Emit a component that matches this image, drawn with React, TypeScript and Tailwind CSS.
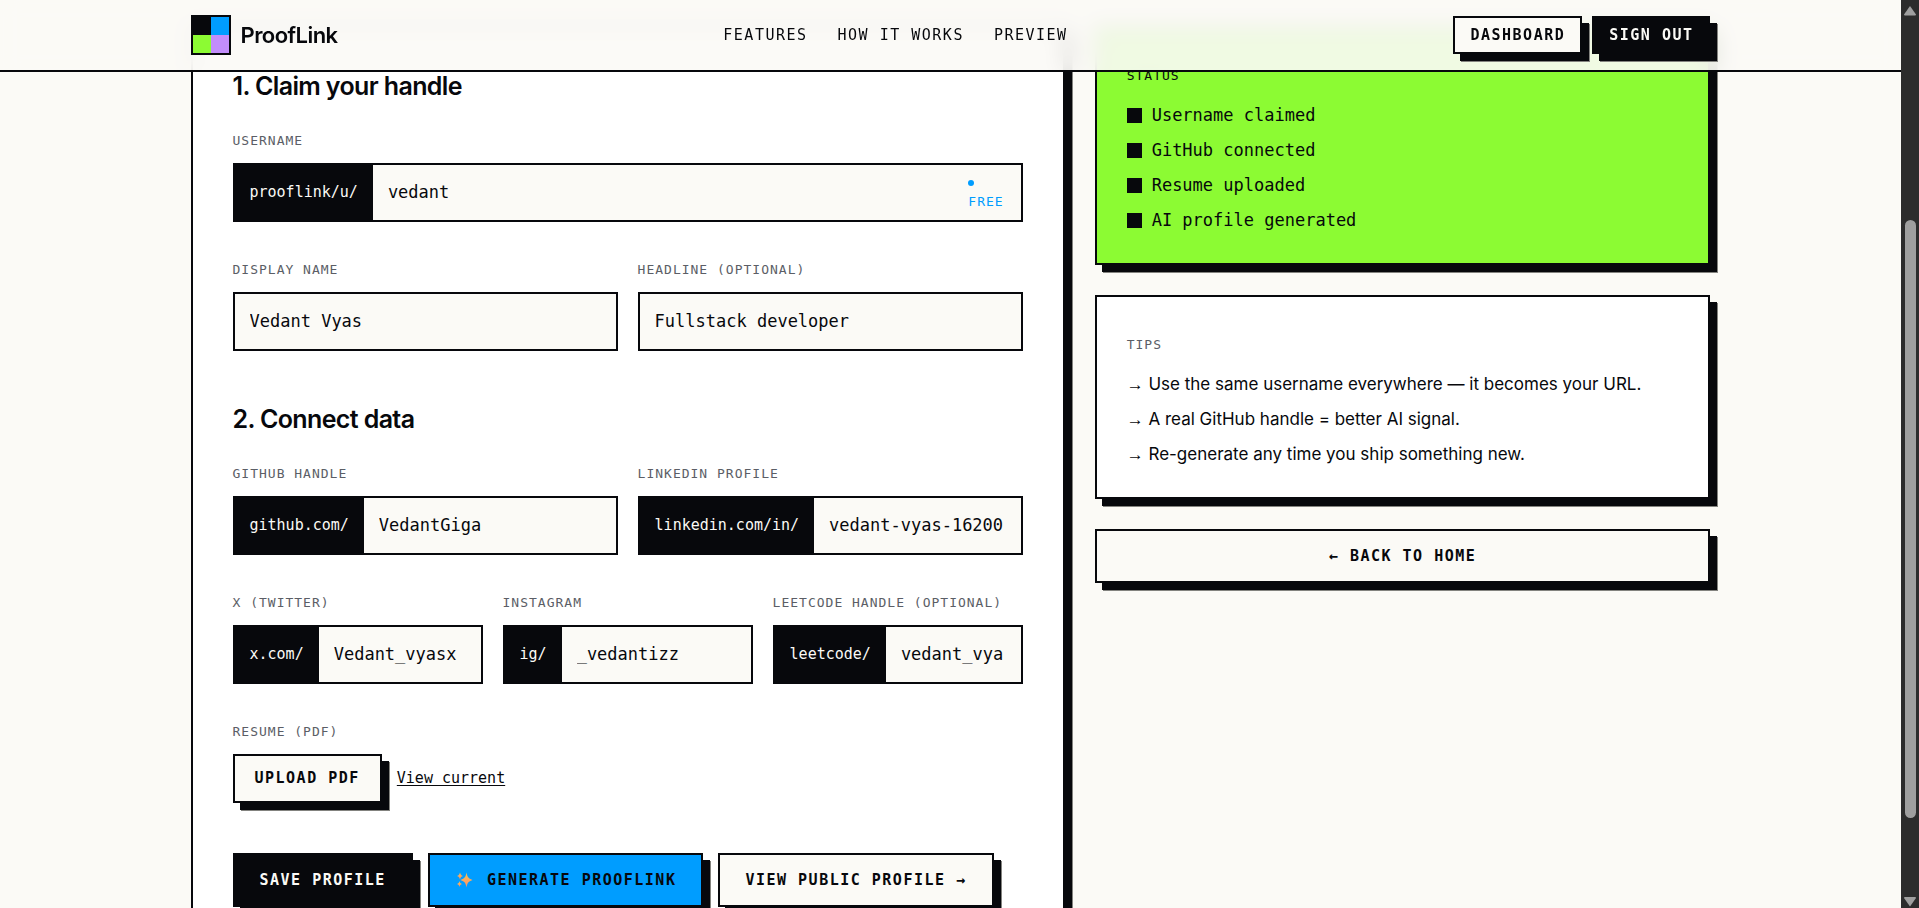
import { useId, useState, ReactNode } from 'react';
import clsx from 'clsx';

const MONO = "font-['DejaVu_Sans_Mono','Liberation_Mono',monospace]";
const SHADOW = 'shadow-[7px_7px_0_#07080c,8px_8px_0_#83837f]';
const LABEL = `${MONO} text-[13px] leading-5 tracking-[1px] uppercase`;
const HEADING = 'mb-[27px] text-[25px] leading-9 font-semibold tracking-tight';

const NAV_LINKS = [
  { label: 'Features', href: '#features' },
  { label: 'How it works', href: '#how' },
  { label: 'Preview', href: '#preview' },
];

const STATUS = ['Username claimed', 'GitHub connected', 'Resume uploaded', 'AI profile generated'];

const TIPS = [
  'Use the same username everywhere — it becomes your URL.',
  'A real GitHub handle = better AI signal.',
  'Re-generate any time you ship something new.',
];

function Logo() {
  return (
    <a href="#top" className="flex items-center gap-[10px]">
      <span className="grid size-10 grid-cols-2 grid-rows-2 border-2 border-[#07080c]">
        <span className="bg-[#07080c]" />
        <span className="bg-[#009dff]" />
        <span className="bg-[#8cfb33]" />
        <span className="bg-[#c28dfb]" />
      </span>
      <span className="text-[22px] font-semibold tracking-tight">ProofLink</span>
    </a>
  );
}

function Sparkles() {
  return (
    <svg width="22" height="18" viewBox="0 0 22 18" aria-hidden="true">
      <defs>
        <linearGradient id="spark" x1="0" y1="0" x2="0" y2="1">
          <stop offset="0" stopColor="#fdc44f" />
          <stop offset="1" stopColor="#fb8d6c" />
        </linearGradient>
      </defs>
      <g fill="url(#spark)">
        <path d="M11.5 1.500C12.500 6.300 13 7.200 17.500 9C13 10.800 12.500 11.700 11.500 16.500C10.500 11.700 10 10.800 5.500 9C10 7.200 10.500 6.300 11.500 1.500Z" />
        <path d="M5 1.500C5.600 3.700 6 4.200 8 5C6 5.800 5.600 6.300 5 8.500C4.400 6.300 4 5.800 2 5C4 4.200 4.400 3.700 5 1.500Z" />
        <path d="M4.500 10C5 12 5.400 12.400 7 13C5.400 13.600 5 14 4.500 16C4 14 3.600 13.600 2 13C3.600 12.400 4 12 4.500 10Z" />
      </g>
    </svg>
  );
}

function Button({
  children,
  className,
  variant = 'paper',
}: {
  children: ReactNode;
  className: string;
  variant?: 'paper' | 'ink' | 'blue';
}) {
  return (
    <button
      type="button"
      className={clsx(
        MONO,
        SHADOW,
        'flex items-center justify-center border-2 border-[#07080c] text-[15px] font-bold tracking-widest whitespace-nowrap uppercase',
        variant === 'paper' && 'bg-[#fbfaf6]',
        variant === 'ink' && 'bg-[#07080c] text-[#fbfaf6]',
        variant === 'blue' && 'bg-[#009dff]',
        className,
      )}
    >
      {children}
    </button>
  );
}

function Field({
  label,
  value,
  prefix,
  children,
}: {
  label: string;
  value: string;
  prefix?: string;
  children?: ReactNode;
}) {
  const id = useId();
  const [text, setText] = useState(value);

  return (
    <div className="min-w-0">
      <label htmlFor={id} className={`${LABEL} mb-3 block text-[#5b5e66]`}>
        {label}
      </label>
      <div className={`${MONO} flex h-[59px] border-2 border-[#07080c] bg-[#fbfaf6]`}>
        {prefix && (
          <span className="flex items-center bg-[#07080c] px-[15px] text-[15px] text-[#fbfaf6]">
            {prefix}
          </span>
        )}
        <input
          id={id}
          type="text"
          value={text}
          onChange={(e) => setText(e.target.value)}
          className="w-full min-w-0 flex-1 bg-transparent px-[15px] text-[17px] outline-none"
        />
        {children}
      </div>
    </div>
  );
}

function ProfileForm() {
  return (
    <form className={`${SHADOW} col-span-7 border-2 border-[#07080c] bg-white p-10`}>
      <h2 className={HEADING}>1. Claim your handle</h2>
      <div className="flex flex-col gap-[38px]">
        <Field label="Username" value="vedant" prefix="prooflink/u/">
          <span className="flex flex-col justify-center px-[17px] text-[13px] leading-5 tracking-[1px] text-[#009dff]">
            <span className="my-[6px] size-[6px] rounded-full bg-[#009dff]" />
            FREE
          </span>
        </Field>
        <div className="grid grid-cols-2 gap-5">
          <Field label="Display name" value="Vedant Vyas" />
          <Field label="Headline (optional)" value="Fullstack developer" />
        </div>
      </div>

      <h2 className={`${HEADING} mt-[50px]`}>2. Connect data</h2>
      <div className="flex flex-col gap-[38px]">
        <div className="grid grid-cols-2 gap-5">
          <Field label="GitHub handle" value="VedantGiga" prefix="github.com/" />
          <Field label="LinkedIn profile" value="vedant-vyas-16200" prefix="linkedin.com/in/" />
        </div>
        <div className="grid grid-cols-3 gap-5">
          <Field label="X (Twitter)" value="Vedant_vyasx" prefix="x.com/" />
          <Field label="Instagram" value="_vedantizz" prefix="ig/" />
          <Field label="LeetCode handle (optional)" value="vedant_vya" prefix="leetcode/" />
        </div>
        <div>
          <p className={`${LABEL} mb-3 text-[#5b5e66]`}>Resume (PDF)</p>
          <div className="flex items-center gap-[15px]">
            <Button className="h-[49px] px-5">Upload PDF</Button>
            <a href="#resume" className={`${MONO} text-[15px] underline underline-offset-2`}>
              View current
            </a>
          </div>
        </div>
      </div>

      <div className="mt-[50px] flex gap-[15px]">
        <Button variant="ink" className="h-[54px] px-[25px]">
          Save profile
        </Button>
        <Button variant="blue" className="h-[54px] gap-[10px] px-[25px]">
          <Sparkles />
          Generate ProofLink
        </Button>
        <Button className="h-[54px] px-[25px]">View public profile →</Button>
      </div>
    </form>
  );
}

function Sidebar() {
  return (
    <aside className="col-span-5 flex flex-col gap-[30px]">
      <section className={`${SHADOW} border-2 border-[#07080c] bg-[#8cfb33] p-[30px]`}>
        <h3 className={`${LABEL} mt-2 mb-[17px]`}>Status</h3>
        <ul className={`${MONO} flex flex-col gap-[10px] text-[17px] leading-[25px]`}>
          {STATUS.map((item) => (
            <li key={item} className="flex items-center gap-[10px]">
              <span className="size-[15px] bg-[#07080c]" />
              {item}
            </li>
          ))}
        </ul>
      </section>

      <section className={`${SHADOW} border-2 border-[#07080c] bg-white p-[30px]`}>
        <h3 className={`${LABEL} mt-2 mb-[17px] text-[#5b5e66]`}>Tips</h3>
        <ul className="flex flex-col gap-[10px] text-[17px] leading-[25px]">
          {TIPS.map((tip) => (
            <li key={tip}>
              <span className="font-['Liberation_Sans',sans-serif]">→</span> {tip}
            </li>
          ))}
        </ul>
      </section>

      <Button className="h-[54px] w-full">← Back to home</Button>
    </aside>
  );
}

function ScrollTrack() {
  return (
    <div className="flex w-[18px] shrink-0 flex-col items-center bg-[#2c2c2c]" aria-hidden="true">
      <svg width="18" height="18" viewBox="0 0 18 18">
        <path d="M9 6L15 14.500Q15 15.500 14 15.500H4Q3 15.500 3 14.500Z" fill="#9f9f9f" />
      </svg>
      <div className="grow-[202]" />
      <div className="w-[11px] grow-[598] rounded-full bg-[#9f9f9f]" />
      <div className="grow-[72]" />
      <svg width="18" height="18" viewBox="0 0 18 18">
        <path d="M9 16.500L15 8Q15 7 14 7H4Q3 7 3 8Z" fill="#9f9f9f" />
      </svg>
    </div>
  );
}

export default function App() {
  return (
    <div className="flex h-screen bg-[#fbfaf6] font-[Inter,sans-serif] text-[#07080c]">
      <div className="min-w-0 flex-1 overflow-hidden">
        <header className="sticky top-0 z-10 border-b-2 border-[#07080c] bg-[#fbfaf6]/90 backdrop-blur-[10px]">
          <div className="mx-auto flex h-[70px] max-w-[1600px] items-center justify-between px-10">
            <Logo />
            <nav className={`${MONO} flex gap-[30px] text-[15px] tracking-widest uppercase`}>
              {NAV_LINKS.map((link) => (
                <a key={link.href} href={link.href}>
                  {link.label}
                </a>
              ))}
            </nav>
            <div className="flex gap-[10px]">
              <Button className="h-[38px] px-[15px]">Dashboard</Button>
              <Button variant="ink" className="h-[38px] px-[15px]">
                Sign out
              </Button>
            </div>
          </div>
        </header>

        {/* the grid slides under the translucent header */}
        <main className="mx-auto -mt-[46px] grid max-w-[1600px] grid-cols-12 items-start gap-[30px] px-10 pb-20">
          <ProfileForm />
          <Sidebar />
        </main>
      </div>
      <ScrollTrack />
    </div>
  );
}
